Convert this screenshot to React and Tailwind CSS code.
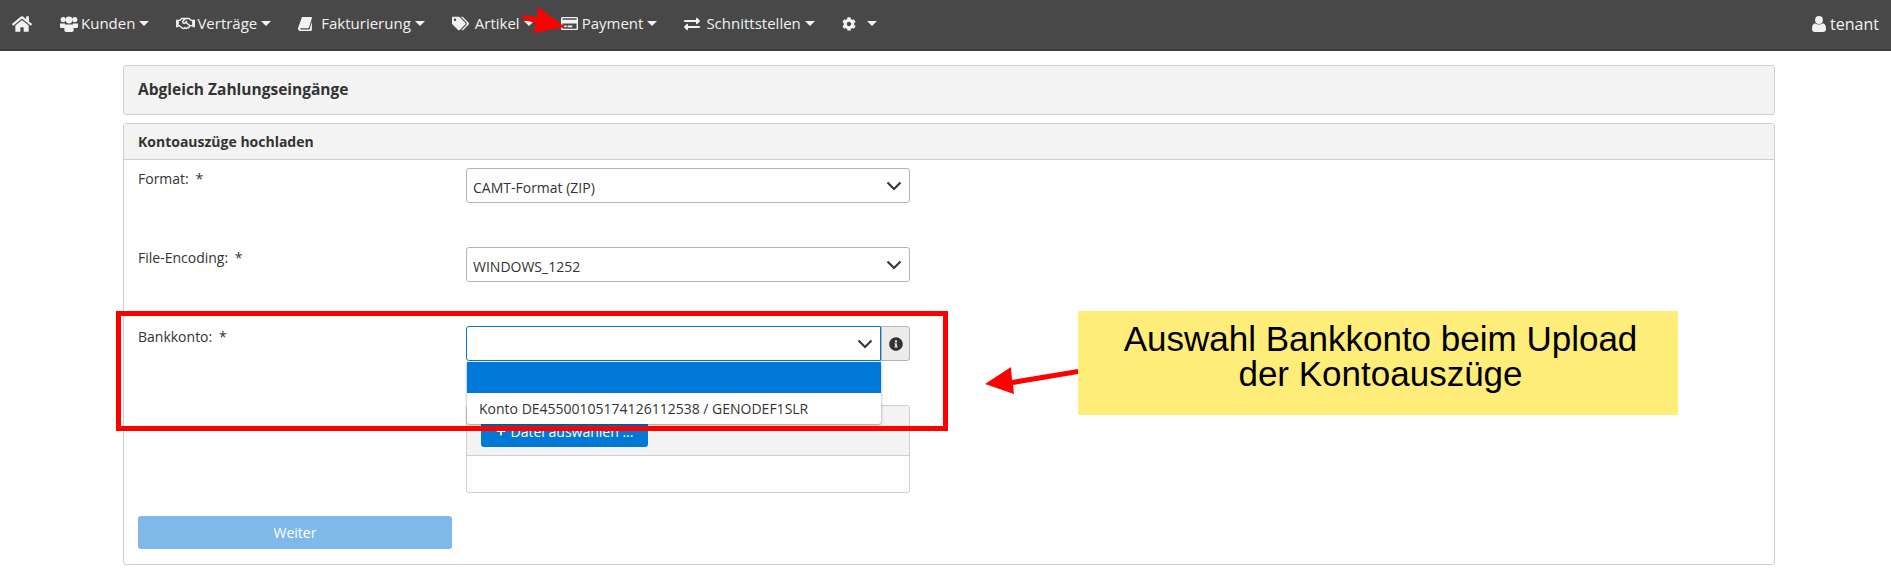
import { FaHome, FaRegHandshake, FaTags, FaRegCreditCard, FaExchangeAlt, FaCog, FaInfoCircle, FaPlus } from 'react-icons/fa';

function Caret() {
  return <span className="ml-[4px] w-0 h-0 border-x-[5px] border-x-transparent border-t-[5px] border-t-[#f2f2f2]" />;
}

function UsersIcon() {
  return (
    <svg width="18" height="16" viewBox="0 0 18 16" fill="currentColor">
      <circle cx="3.2" cy="3.6" r="2.6" />
      <circle cx="14.8" cy="3.6" r="2.6" />
      <path d="M0 7.5h5v4.5H1.2Q0 12 0 10.8zM18 7.5h-5v4.5h3.8q1.2 0 1.2-1.2z" />
      <circle cx="9" cy="4" r="3.4" />
      <path d="M4.4 8.6h9.2v5.6q0 1.8-1.8 1.8H6.2q-1.8 0-1.8-1.8z" />
    </svg>
  );
}

function BookIcon() {
  return (
    <svg width="14" height="14" viewBox="0 0 14 14" fill="currentColor">
      <path d="M4 0h9.4q.8 0 .5 1l-2.9 9.4q-.2.8-1 .8H3q-1 0-.9.8 0 .4.8.4h8.6l2.4-8v9L12 14H2.2Q.4 14 0 12q-.1-.8.2-1.5z" />
    </svg>
  );
}

function UserIcon() {
  return (
    <svg width="14" height="16" viewBox="0 0 14 16" fill="currentColor">
      <circle cx="7" cy="4" r="3.9" />
      <path d="M0 13q0-5 3-5.8 4 2.6 8 0 3 .8 3 5.8 0 3-3 3H3q-3 0-3-3z" />
    </svg>
  );
}

function NavItem({ icon, label, iconClass }) {
  return (
    <a className="flex items-center text-[15px] text-[#f2f2f2]">
      <span className={iconClass}>{icon}</span>
      {label}
      <Caret />
    </a>
  );
}

function Chevron() {
  return (
    <svg width="16" height="10" viewBox="0 0 16 10" className="text-[#343a40]">
      <path d="M1.5 1.5 8 8l6.5-6.5" fill="none" stroke="currentColor" strokeWidth="2.2" />
    </svg>
  );
}

function SelectBox({ value }) {
  return (
    <div className="w-[444px] h-[35px] border border-[#b5b5b5] rounded-[3px] bg-white flex items-center justify-between pl-[6px] pr-[7px] text-[14px] text-[#333]">
      <span className="pt-[3px]">{value}</span>
      <Chevron />
    </div>
  );
}

function FormRow({ label, children, className }) {
  return (
    <div className={`flex ${className}`}>
      <label className="w-[328px] text-[14px] leading-[21px] text-[#333] shrink-0">
        {label}: <span className="ml-[3px]">*</span>
      </label>
      {children}
    </div>
  );
}

export default function App() {
  return (
    <div className="relative w-[1891px] h-[580px] overflow-hidden bg-white font-['Open_Sans',sans-serif]">
      <nav className="h-[51px] bg-[#484848] border-b-2 border-[#3a3a3a] flex items-center justify-between pl-[12px] pr-[12px] pb-[2px]">
        <div className="flex items-center gap-[27px]">
          <a className="text-[#f2f2f2] mr-[1px]"><FaHome size={20} /></a>
          <NavItem icon={<UsersIcon />} label="Kunden" iconClass="mr-[3px] block" />
          <NavItem icon={<FaRegHandshake size={19} />} label="Verträge" iconClass="mr-[2px]" />
          <NavItem icon={<BookIcon />} label="Fakturierung" iconClass="mr-[9px] block" />
          <NavItem icon={<FaTags size={17} />} label="Artikel" iconClass="mr-[6px]" />
          <NavItem icon={<FaRegCreditCard size={17} />} label="Payment" iconClass="mr-[4px]" />
          <NavItem icon={<FaExchangeAlt size={16} />} label="Schnittstellen" iconClass="mr-[6px]" />
          <a className="flex items-center text-[#f2f2f2]">
            <FaCog size={14} />
            <span className="ml-[7px] flex"><Caret /></span>
          </a>
        </div>
        <a className="flex items-center gap-[4px] text-[16px] text-[#f2f2f2]">
          <UserIcon />
          tenant
        </a>
      </nav>

      <main className="ml-[123px] w-[1652px] mt-[14px]">
        <div className="h-[50px] bg-[#f3f3f3] border border-[#cfcfcf] rounded-[3px] flex items-center px-[14px] text-[15.5px] font-bold text-[#333]">
          Abgleich Zahlungseingänge
        </div>

        <section className="mt-[8px] border border-[#cfcfcf] rounded-[3px]">
          <div className="h-[36px] bg-[#f3f3f3] border-b border-[#cfcfcf] flex items-center px-[14px] text-[14px] font-bold text-[#333]">
            Kontoauszüge hochladen
          </div>
          <div className="pt-[8px] pl-[14px] pb-[15px]">
            <FormRow label="Format" className="h-[79px]">
              <SelectBox value="CAMT-Format (ZIP)" />
            </FormRow>
            <FormRow label="File-Encoding" className="h-[79px]">
              <SelectBox value="WINDOWS_1252" />
            </FormRow>
            <FormRow label="Bankkonto">
              <div className="w-[444px]">
                <div className="relative flex h-[35px]">
                  <div className="w-[415px] border border-[#0078d7] rounded-l-[3px] bg-white flex items-center justify-end pr-[7px]">
                    <Chevron />
                  </div>
                  <div className="w-[29px] bg-[#ebebeb] border border-l-[#b5b5b5] border-[#b5b5b5] rounded-r-[3px] flex items-center justify-center text-[#333]">
                    <FaInfoCircle size={14} />
                  </div>
                  <div className="absolute z-10 left-[1px] top-[36px] w-[414px] bg-white rounded-b-[3px] shadow-[0_1px_3px_rgba(0,0,0,0.4)]">
                    <div className="h-[31px] bg-[#0078d7]" />
                    <div className="h-[31px] flex items-center pl-[12px] text-[14px] text-[#333]">
                      Konto DE45500105174126112538 / GENODEF1SLR
                    </div>
                  </div>
                </div>
                <div className="mt-[44px] h-[88px] border border-[#cfcfcf] rounded-[3px]">
                  <div className="h-[50px] bg-[#f3f3f3] border-b border-[#cfcfcf] pl-[14px] pt-[9px]">
                    <button className="w-[167px] h-[32px] bg-[#0078d7] rounded-[3px] text-white text-[14px] flex items-center justify-center gap-[5px]">
                      <FaPlus size={10} />
                      Datei auswählen ...
                    </button>
                  </div>
                </div>
              </div>
            </FormRow>
            <button className="mt-[23px] block w-[314px] h-[33px] bg-[#7fb9e9] rounded-[3px] text-white text-[14px]">
              Weiter
            </button>
          </div>
        </section>
      </main>

      {/* annotations on top of the screenshot */}
      <div className="absolute z-20 left-[116px] top-[311px] w-[832px] h-[120px] border-[5px] border-[#ff0000]" />
      <div className="absolute z-20 left-[1078px] top-[311px] w-[600px] h-[104px] bg-[#ffed79] text-center text-black text-[35px] leading-[35px] pt-[10px] pl-[5px] font-['Liberation_Sans',sans-serif]">
        Auswahl Bankkonto beim Upload
        <br />
        der Kontoauszüge
      </div>
      <svg className="absolute z-20 left-0 top-0" width="1891" height="580">
        <polygon points="523,15 537,17 538,7 565,27 533,33 536,23 523,20" fill="#ff0000" />
        <polygon points="1078,369 1012,380 1011,367 985,384 1014,394 1013,385 1078,374" fill="#ff0000" />
      </svg>
    </div>
  );
}
